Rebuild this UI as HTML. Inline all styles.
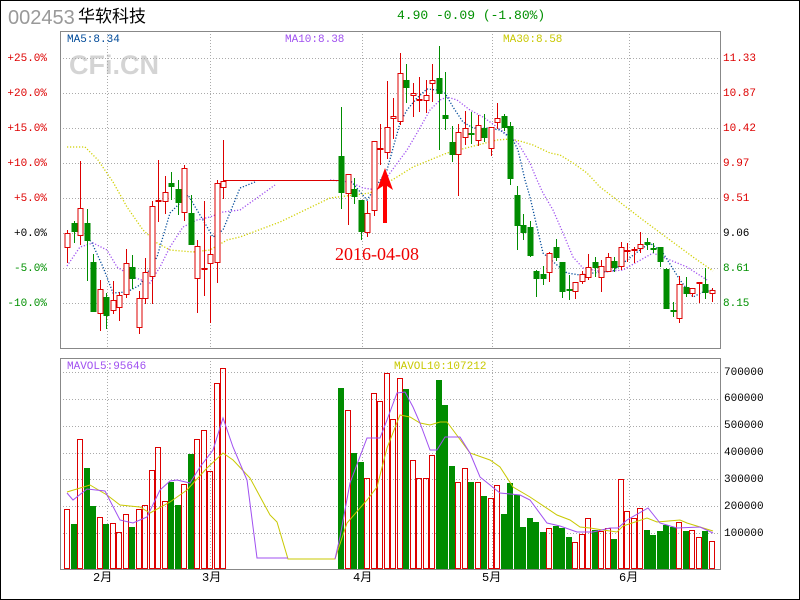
<!DOCTYPE html>
<html><head><meta charset="utf-8"><style>
body{margin:0;width:800px;height:600px;overflow:hidden;background:#fff;font-family:"Liberation Mono",monospace}
#w{position:relative;width:798px;height:598px;border:1px solid #000}
.t{position:absolute;white-space:nowrap;font-size:11px;line-height:12px}
</style></head><body><div id="w">
<div class="t" style="left:7px;top:6px;font-family:'Liberation Sans',sans-serif;font-size:20px;line-height:22px;color:#999">002453</div>
<div class="t" style="left:77px;top:5px;font-family:'Liberation Sans','Noto Sans CJK SC',sans-serif;font-size:17px;line-height:22px;color:#000">华软科技</div>
<div class="t" style="left:396px;top:8px;font-size:13px;line-height:14px;color:#009000">4.90 -0.09 (-1.80%)</div>
<div class="t" style="left:68px;top:50px;font-family:'Liberation Sans',sans-serif;font-weight:bold;font-size:27px;line-height:28px;color:#d4d4d4">CFi.CN</div>
<svg id="s" width="800" height="600" style="position:absolute;left:-1px;top:-1px"></svg>
<div class="t" style="left:66px;top:33px;color:#004a99">MA5:8.34</div>
<div class="t" style="left:284px;top:33px;color:#a050f0">MA10:8.38</div>
<div class="t" style="left:502px;top:33px;color:#c8c800">MA30:8.58</div>
<div class="t" style="left:66px;top:360px;color:#a050f0">MAVOL5:95646</div>
<div class="t" style="left:393px;top:360px;color:#c8c800">MAVOL10:107212</div>
<div class="t" style="right:752px;top:52px;color:#d00">+25.0%</div>
<div class="t" style="right:752px;top:87px;color:#d00">+20.0%</div>
<div class="t" style="right:752px;top:122px;color:#d00">+15.0%</div>
<div class="t" style="right:752px;top:157px;color:#d00">+10.0%</div>
<div class="t" style="right:752px;top:192px;color:#d00">+5.0%</div>
<div class="t" style="right:752px;top:227px;color:#000">+0.0%</div>
<div class="t" style="right:752px;top:262px;color:#009000">-5.0%</div>
<div class="t" style="right:752px;top:297px;color:#009000">-10.0%</div>
<div class="t" style="left:722px;top:52px;color:#d00">11.33</div>
<div class="t" style="left:722px;top:87px;color:#d00">10.87</div>
<div class="t" style="left:722px;top:122px;color:#d00">10.42</div>
<div class="t" style="left:722px;top:157px;color:#d00">9.97</div>
<div class="t" style="left:722px;top:192px;color:#d00">9.51</div>
<div class="t" style="left:722px;top:227px;color:#000">9.06</div>
<div class="t" style="left:722px;top:262px;color:#009000">8.61</div>
<div class="t" style="left:722px;top:297px;color:#009000">8.15</div>
<div class="t" style="left:723px;top:366px">700000</div>
<div class="t" style="left:723px;top:392px">600000</div>
<div class="t" style="left:723px;top:419px">500000</div>
<div class="t" style="left:723px;top:446px">400000</div>
<div class="t" style="left:723px;top:473px">300000</div>
<div class="t" style="left:723px;top:500px">200000</div>
<div class="t" style="left:723px;top:527px">100000</div>
<div class="t" style="left:92px;top:571px;font-size:12px;font-family:'Liberation Mono','Noto Sans CJK SC',monospace">2月</div>
<div class="t" style="left:201px;top:571px;font-size:12px;font-family:'Liberation Mono','Noto Sans CJK SC',monospace">3月</div>
<div class="t" style="left:352px;top:571px;font-size:12px;font-family:'Liberation Mono','Noto Sans CJK SC',monospace">4月</div>
<div class="t" style="left:481px;top:571px;font-size:12px;font-family:'Liberation Mono','Noto Sans CJK SC',monospace">5月</div>
<div class="t" style="left:618px;top:571px;font-size:12px;font-family:'Liberation Mono','Noto Sans CJK SC',monospace">6月</div>
<div class="t" style="left:334px;top:243px;font-family:'Liberation Serif',serif;font-size:18px;line-height:20px;color:#e00">2016-04-08</div>
</div>
<script>
var s=document.getElementById('s'),h='';
var R='#dd0000',G='#008c00';
function L(x1,y1,x2,y2,c,st){h+='<line x1="'+x1+'" y1="'+y1+'" x2="'+x2+'" y2="'+y2+'" stroke="'+c+'" stroke-width="1" '+(st||'')+'/>';}
// grids
var dash='stroke-dasharray="1,2"';
[58,93,128,163,198,233,268,303].forEach(function(y){L(60,y+.5,720,y+.5,'#aaa',dash)});
[372,399,426,453,479,506,533].forEach(function(y){L(60,y+.5,720,y+.5,'#aaa',dash)});
[107,210,362,492,629].forEach(function(x){L(x+.5,31,x+.5,348,'#aaa',dash);L(x+.5,358,x+.5,569,'#aaa',dash)});
h+='<rect x="60.5" y="31.5" width="660" height="317" fill="none" stroke="#888"/>';
h+='<rect x="60.5" y="358.5" width="660" height="211" fill="none" stroke="#888"/>';
function P(pts,c,st,w){h+='<polyline fill="none" stroke="'+c+'" stroke-width="'+(w||1)+'" '+(st||'')+' points="'+pts+'"/>';}
var dd='stroke-dasharray="1.2,1.8"';
// MA30
P('67,147 85,147 98,160 113,182 127,207 143,230 157,243 170,250 193,252 210,250 227,240 240,237 280,222 330,198 370,193 397,177 413,167 430,160 447,153 470,147 497,140 510,139 520,141 533,145 550,153 560,155 573,163 587,173 600,187 617,200 643,220 670,240 693,257 713,271','#d0d000',dd,1.3);
// MA10
P('67,266 80,247 93,243 107,250 117,267 133,277 150,283 160,267 170,247 183,227 197,220 210,217 223,212 240,210 275,185','#a050f0',dd,1.3);
P('330,180 350,182 363,188 377,190 390,173 407,150 417,133 430,110 440,100 447,97 457,100 470,110 483,117 497,127 510,137 518,143 530,163 537,180 543,193 553,210 563,233 573,257 583,268 603,272 623,270 637,262 653,253 670,260 687,267 707,280','#a050f0',dd,1.3);
// MA5
P('88,238 92,243 103,267 113,293 127,292 140,285 157,257 170,213 188,195 203,220 213,237 223,230 240,188 255,182','#004a99',dd,1.3);
P('340,178 350,180 367,200 387,170 400,123 407,110 417,98 427,89 437,90 445,93 453,107 463,122 473,128 487,128 500,130 513,140 518,150 525,180 530,197 540,240 543,253 557,265 567,273 580,275 593,273 613,271 627,260 640,250 650,243 663,253 680,280 693,297 703,292 713,290','#004a99',dd,1.3);
// suspension line
L(223,180.5,341,180.5,R);
function C(x,t,b,hi,lo,c){x=Math.round(x)+.5;L(x,hi,x,lo,c==1?R:G);
 if(b-t<1)b=t+1;
 if(c==1)h+='<rect x="'+(x-2.5)+'" y="'+(t+.5)+'" width="5" height="'+(b-t)+'" fill="#fff" stroke="'+R+'"/>';
 else h+='<rect x="'+(x-3)+'" y="'+t+'" width="6" height="'+(b-t+1)+'" fill="'+G+'"/>';}
var A=[[233,247,230,263,1],[223,231,221,243,0],[208,235,161,245,1],[223,240,209,281,0],[262,311,254,311,0],[289,313,280,331,1],[297,315,293,329,0],[300,310,281,314,1],[295,307,292,321,1],[263,294,249,298,1],[267,278,255,289,0],[298,327,291,334,1],[272,298,258,304,1],[206,276,201,304,1],[200,200,160,222,1],[192,201,176,214,1],[183,186,172,200,0],[189,202,180,215,0],[168,212,165,221,1],[213,244,195,244,0],[246,278,240,313,1],[268,268,201,296,1],[254,263,236,323,1],[183,262,180,283,1],[181,187,140,199,1]];
A.forEach(function(d,i){C(67+6.5*i,d[0],d[1],d[2],d[3],d[4])});
var B=[[156,192,107,209,0],[174,193,174,225,1],[189,196,178,204,0],[200,231,200,240,0],[213,232,201,237,1],[141,210,141,216,1],[148,149,124,165,1],[127,152,81,159,1],[116,118,98,139,1],[73,121,53,125,1],[80,87,64,103,0],[93,95,83,117,1],[99,100,77,112,1],[95,100,80,113,1],[80,83,64,102,1],[78,93,46,150,0],[115,118,72,130,0],[142,154,126,162,0],[132,154,124,196,1],[128,137,111,145,1],[133,134,112,144,0],[125,140,115,146,1],[128,137,114,142,0],[127,148,127,156,1],[118,122,103,129,1],[116,127,114,131,0],[126,178,122,185,0],[195,225,186,250,0],[225,232,214,240,0],[227,255,221,257,0],[271,278,270,297,0],[274,278,266,285,0],[253,272,252,282,1],[247,257,239,261,0],[262,291,262,298,0],[289,290,275,300,0],[282,291,282,299,1],[274,281,271,284,1],[267,277,254,280,1],[262,267,257,277,0],[266,277,260,292,1],[257,271,253,272,1],[261,267,257,272,0],[247,266,242,270,1],[250,251,243,262,1],[249,250,247,263,1],[244,248,232,253,1],[242,244,238,250,0],[248,249,243,253,0],[247,261,247,267,0],[269,308,268,308,0],[310,311,302,317,0],[284,318,276,323,1],[287,293,277,297,0],[288,293,288,297,1],[282,283,282,303,1],[284,292,268,299,0],[290,293,288,302,1]];
B.forEach(function(d,i){C(341+6.5*i,d[0],d[1],d[2],d[3],d[4])});
// arrow
h+='<polygon points="385,168 377,190 383,186 383,223 387,223 387,186 393,190" fill="#f00"/>';
// volumes
function V(x,t,c){x=Math.round(x);
 if(c==1)h+='<rect x="'+(x-2.5)+'" y="'+(t+.5)+'" width="5" height="'+(568-t)+'" fill="none" stroke="'+R+'"/>';
 else h+='<rect x="'+(x-3)+'" y="'+t+'" width="6" height="'+(569-t)+'" fill="'+G+'"/>';}
var VA=[509,524,439,468,506,517,524,523,532,514,527,509,505,470,447,501,482,505,484,454,439,430,471,383,368];
VA.forEach(function(t,i){V(67+6.5*i,t,A[i][4])});
var VB=[388,410,453,462,478,393,401,373,419,378,389,460,478,478,455,380,405,466,482,468,482,482,496,498,485,514,483,495,527,518,522,532,528,526,528,537,542,534,518,530,531,528,539,479,511,518,508,530,535,531,525,527,522,531,530,537,531,541];
VB.forEach(function(t,i){V(341+6.5*i,t,B[i][4])});
P('67,492 90,485 107,495 120,505 140,507 150,513 170,502 187,490 207,468 223,453 233,460 250,478 270,515 277,522 288,559 335,559 347,523 367,500 377,487 387,448 400,415 410,417 420,423 430,425 440,422 447,422 453,430 470,453 490,460 500,467 513,487 530,497 557,515 570,520 580,527 590,528 603,530 617,532 623,526 647,518 657,522 680,520 687,523 713,531','#c8c800');
P('67,493 73,500 87,489 105,491 120,520 133,523 147,517 160,490 170,481 177,480 190,483 200,467 213,450 223,418 233,447 247,480 257,558 288,558','#a050f0');
P('335,559 340,537 350,483 367,438 380,438 387,420 397,393 405,392 413,407 420,423 430,450 437,450 445,437 460,437 470,453 480,477 500,493 520,495 530,500 547,523 560,526 577,532 593,532 610,528 618,528 627,520 648,508 660,523 677,528 700,527 713,533','#a050f0');
s.innerHTML=h;
</script>
</body></html>
